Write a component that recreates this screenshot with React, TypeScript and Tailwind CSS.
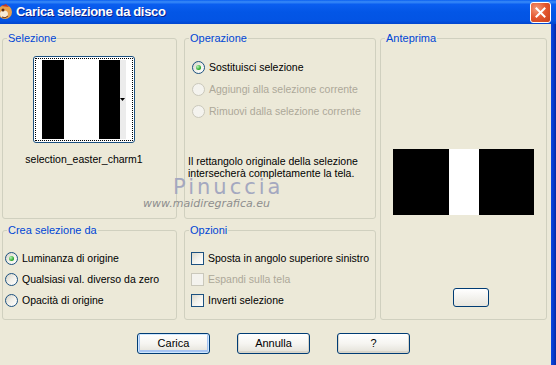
import React from "react";

const font = "font-['Liberation_Sans',Arial,sans-serif]";

function Radio({ checked = false, disabled = false }: { checked?: boolean; disabled?: boolean }) {
  return (
    <span
      className={`flex h-[13px] w-[13px] shrink-0 items-center justify-center rounded-full border ${
        disabled
          ? "border-[#cac8bb] bg-[#f4f3ee]"
          : "border-[#1c5180] bg-gradient-to-br from-[#d6d3c6] via-[#f1f0ea] to-white"
      }`}
    >
      {checked && (
        <span className="h-[5px] w-[5px] rounded-full bg-[radial-gradient(circle_at_35%_35%,#b6f5b6,#20a020_70%)]" />
      )}
    </span>
  );
}

function Check({ disabled = false }: { disabled?: boolean }) {
  return (
    <span
      className={`h-[13px] w-[13px] shrink-0 border ${
        disabled
          ? "border-[#cac8bb] bg-[#f4f3ee]"
          : "border-[#1c5180] bg-gradient-to-br from-[#dcd9cb] via-[#f3f2ec] to-white"
      }`}
    />
  );
}

function Option({
  children,
  control,
  disabled = false,
}: {
  children: React.ReactNode;
  control: React.ReactNode;
  disabled?: boolean;
}) {
  return (
    <div className="flex h-[13px] items-center gap-[4px]">
      {control}
      <span className={`whitespace-nowrap ${disabled ? "text-[#aca899]" : "text-black"}`}>{children}</span>
    </div>
  );
}

function Group({
  title,
  className,
  children,
}: {
  title: string;
  className: string;
  children?: React.ReactNode;
}) {
  return (
    <fieldset className={`rounded-[3px] border border-[#d0d0bf] ${className}`}>
      <legend className="ml-[4px] px-[1px] text-[11px] leading-[13px] text-[#0046d5]">{title}</legend>
      {children}
    </fieldset>
  );
}

function Button({ children, def = false }: { children: React.ReactNode; def?: boolean }) {
  return (
    <button
      className={`h-[21px] w-[73px] rounded-[3px] border border-[#003c74] bg-gradient-to-b from-white via-[#f6f5f1] to-[#e3e1d8] text-[11px] text-black ${
        def ? "shadow-[inset_0_0_0_1px_#cee7ff,inset_0_-1px_0_2px_#a6c4f2]" : "shadow-[inset_0_-1px_0_1px_#d8d5ca]"
      }`}
    >
      {children}
    </button>
  );
}

export default function App() {
  return (
    <div className={`flex h-[365px] w-[556px] flex-col overflow-hidden bg-[#ece9d8] text-[10.5px] ${font}`}>
      {/* title bar */}
      <div className="flex h-[24px] shrink-0 items-center bg-[linear-gradient(to_bottom,#0a5ff0_0%,#3a8cf8_8%,#0a5ef0_18%,#0356e6_50%,#0354e4_85%,#0246cf_100%)]">
        <svg width="14" height="18" viewBox="0 0 14 18" className="shrink-0">
          <ellipse cx="5" cy="9" rx="7" ry="7" fill="#e8a04a" />
          <ellipse cx="4" cy="11" rx="4" ry="3.5" fill="#f6ead6" />
          <circle cx="3" cy="7" r="1.5" fill="#5a2b10" />
          <path d="M1 3 L6 1 L9 4 Z" fill="#c0392b" />
          <path d="M2 14 Q5 16 8 13" stroke="#7a3a12" strokeWidth="1" fill="none" />
        </svg>
        <span className="ml-[2px] text-[13px] font-bold tracking-[-0.35px] text-white [text-shadow:1px_1px_0_#0a1e8c]">
          Carica selezione da disco
        </span>
        <div className="ml-auto mr-[5px] flex h-[21px] w-[21px] items-center justify-center rounded-[3px] border border-white bg-[radial-gradient(circle_at_30%_30%,#f49a7a,#e3552d_50%,#c8401c)]">
          <svg width="11" height="11" viewBox="0 0 11 11">
            <path d="M1.5 1.5 L9.5 9.5 M9.5 1.5 L1.5 9.5" stroke="white" strokeWidth="2" strokeLinecap="square" />
          </svg>
        </div>
      </div>

      <div className="flex flex-1">
        <div className="relative w-[551px] pl-[2px] pt-[8px]">
          <div className="flex">
            {/* left column */}
            <div className="flex w-[175px] flex-col gap-[5px]">
              <Group title="Selezione" className="h-[187px]">
                <div className="ml-[30px] mt-[11px] flex w-[102px] flex-col items-center">
                  <div className="h-[87px] w-[102px] rounded-[3px] border border-[#1c5180] bg-white p-[1px]">
                    <div className="flex h-full w-full border border-dotted border-black px-[6px] py-[1px]">
                      <div className="w-[22px] bg-black" />
                      <div className="w-[35px] bg-white" />
                      <div className="w-[21px] bg-black" />
                      <div className="relative flex-1 bg-[#ececec]">
                        <svg width="5" height="3" viewBox="0 0 5 3" className="absolute right-[1px] top-[38px]">
                          <path d="M0 0 H5 L2.5 3 Z" fill="black" />
                        </svg>
                      </div>
                    </div>
                  </div>
                  <div className="mt-[9px] whitespace-nowrap text-black">selection_easter_charm1</div>
                </div>
              </Group>
              <Group title="Crea selezione da" className="h-[96px]">
                <div className="ml-[2px] mt-[15px] flex flex-col gap-[8px]">
                  <Option control={<Radio checked />}>Luminanza di origine</Option>
                  <Option control={<Radio />}>Qualsiasi val. diverso da zero</Option>
                  <Option control={<Radio />}>Opacità di origine</Option>
                </div>
              </Group>
            </div>

            {/* middle column */}
            <div className="ml-[7px] flex w-[192px] flex-col gap-[5px]">
              <Group title="Operazione" className="h-[187px]">
                <div className="ml-[7px] mt-[16px] flex flex-col gap-[9px]">
                  <Option control={<Radio checked />}>Sostituisci selezione</Option>
                  <Option control={<Radio disabled />} disabled>
                    Aggiungi alla selezione corrente
                  </Option>
                  <Option control={<Radio disabled />} disabled>
                    Rimuovi dalla selezione corrente
                  </Option>
                </div>
                <p className="ml-[3px] mt-[37px] leading-[12px] text-black">
                  Il rettangolo originale della selezione
                  <br />
                  intersecherà completamente la tela.
                </p>
              </Group>
              <Group title="Opzioni" className="h-[96px]">
                <div className="ml-[6px] mt-[15px] flex flex-col gap-[8px]">
                  <Option control={<Check />}>Sposta in angolo superiore sinistro</Option>
                  <Option control={<Check disabled />} disabled>
                    Espandi sulla tela
                  </Option>
                  <Option control={<Check />}>Inverti selezione</Option>
                </div>
              </Group>
            </div>

            {/* right column */}
            <div className="ml-[4px] w-[167px]">
              <Group title="Anteprima" className="flex h-[288px] flex-col items-center">
                <div className="mt-[104px] flex h-[66px] w-[141px]">
                  <div className="w-[56px] bg-black" />
                  <div className="w-[30px] bg-white" />
                  <div className="flex-1 bg-black" />
                </div>
                <button className="ml-[14px] mt-[73px] h-[19px] w-[36px] rounded-[3px] border border-[#003c74] bg-gradient-to-b from-white to-[#e8e6de]" />
              </Group>
            </div>
          </div>

          {/* buttons */}
          <div className="mt-[13px] flex gap-[27px] pl-[135px]">
            <Button def>Carica</Button>
            <Button>Annulla</Button>
            <Button>?</Button>
          </div>

          {/* watermark */}
          <div className="pointer-events-none absolute left-[143px] top-[152px] flex flex-col font-['DejaVu_Sans',sans-serif]">
            <span className="ml-[30px] text-[21px] leading-[22px] tracking-[3px] text-[#a4a8c0]">Pinuccia</span>
            <span className="text-[11px] italic leading-[12px] text-[#8e8e8e]">www.maidiregrafica.eu</span>
          </div>
        </div>
        <div className="w-[5px] bg-[linear-gradient(to_right,#0a48e0,#0638c8_60%,#052aa0)]" />
      </div>
    </div>
  );
}
